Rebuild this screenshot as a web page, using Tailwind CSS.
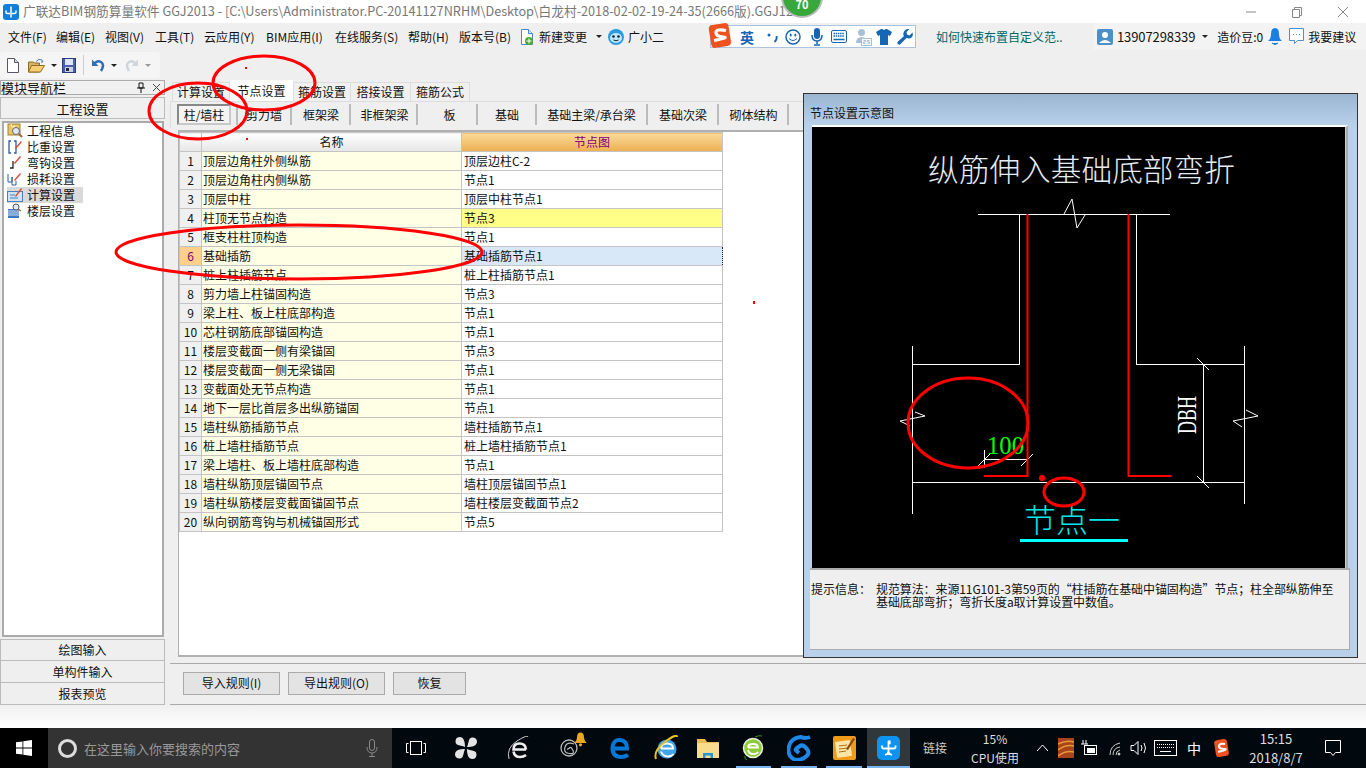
<!doctype html>
<html lang="zh">
<head>
<meta charset="utf-8">
<title>广联达BIM钢筋算量软件</title>
<script src="https://cdn.jsdelivr.net/npm/@tailwindcss/browser@4"></script>
</head>
<body class="m-0">
<div class="relative flex flex-col w-[1366px] h-[768px] overflow-hidden bg-[#efefef] text-[12px] leading-none text-[#111] font-['Noto_Sans_CJK_SC',sans-serif]">

  <!-- title bar -->
  <div class="flex items-center h-[23px] bg-white shrink-0">
    <svg class="ml-[3px] w-[16px] h-[16px]" viewBox="0 0 16 16"><rect width="16" height="16" rx="3" fill="#0f7fd8"/><path d="M8 2.500v11M3 6.500v1.500a1.500 1.500 0 0 0 1.500 1.500H7M13 6.500v1.500a1.500 1.500 0 0 1-1.500 1.500H9" stroke="#fff" stroke-width="1.500" fill="none"/></svg>
    <span class="ml-[4px] w-[780px] text-[12.7px] whitespace-nowrap text-[#777]">广联达BIM钢筋算量软件 GGJ2013 - [C:\Users\Administrator.PC-20141127NRHM\Desktop\白龙村-2018-02-02-19-24-35(2666版).GGJ12</span>
    <div class="ml-auto flex items-center text-[#777]">
      <svg class="w-[46px] h-[16px]" viewBox="0 0 46 16"><path d="M18 8h10" stroke="#888"/></svg>
      <svg class="w-[46px] h-[16px]" viewBox="0 0 46 16"><path d="M18.500 5.500h7v8h-7zM20.500 5.500v-2h7v8h-2" stroke="#888" fill="none"/></svg>
      <svg class="w-[46px] h-[16px]" viewBox="0 0 46 16"><path d="M18 3l10 10M28 3L18 13" stroke="#888"/></svg>
    </div>
  </div>

  <!-- menu bar -->
  <div class="flex items-center h-[27px] shrink-0 relative">
    <span class="ml-[8px] w-[48px]">文件(F)</span>
    <span class="w-[49px]">编辑(E)</span>
    <span class="w-[50px]">视图(V)</span>
    <span class="w-[49px]">工具(T)</span>
    <span class="w-[62px]">云应用(Y)</span>
    <span class="w-[69px]">BIM应用(I)</span>
    <span class="w-[73px]">在线服务(S)</span>
    <span class="w-[51px]">帮助(H)</span>
    <span class="w-[61px]">版本号(B)</span>
    <svg class="w-[14px] h-[18px]" viewBox="0 0 14 18"><path d="M1.500 1.500h7l4 4v11h-11z" fill="#fff" stroke="#4a86c8"/><path d="M8.500 1.500v4h4" fill="#cfe2f5" stroke="#4a86c8"/><circle cx="9" cy="13" r="4" fill="#4ca82e"/><path d="M9 10.500v5M6.500 13h5" stroke="#fff"/></svg>
    <span class="ml-[5px] w-[57px]">新建变更</span>
    <span class="w-0 h-0 border-x-[3px] border-x-transparent border-t-[3px] border-t-[#222]"></span>
    <svg class="ml-[5px] w-[18px] h-[18px]" viewBox="0 0 18 18"><circle cx="9" cy="9" r="8" fill="#2a9be0"/><ellipse cx="9" cy="10" rx="6" ry="5" fill="#bfe6fb"/><circle cx="6.500" cy="8.500" r="1.300" fill="#123"/><circle cx="11.500" cy="8.500" r="1.300" fill="#123"/><path d="M6.500 12q2.500 1.500 5 0" stroke="#123" fill="none"/></svg>
    <span class="ml-[3px]">广小二</span>

    <!-- sogou ime bar -->
    <div class="ml-[46px] relative flex items-center h-[23px] w-[206px] bg-white border border-[#a9c3e2]">
      <svg class="absolute left-[-3px] top-[-5px] w-[24px] h-[30px]" viewBox="0 0 24 30"><rect x="2" y="3" width="20" height="23" rx="4" transform="rotate(-9 12 15)" fill="#f0521f"/><path d="M18 9.500Q8 7.500 8 11.500T15 16t-9 3.500" stroke="#fff" stroke-width="3.200" fill="none"/></svg>
      <span class="ml-[29px] text-[14px] font-bold text-[#1766b4]">英</span>
      <svg class="ml-[13px] w-[12px] h-[14px]" viewBox="0 0 12 14"><circle cx="2" cy="5" r="1.500" fill="#1766b4"/><path d="M9.500 6q1 3-2 6" stroke="#1766b4" stroke-width="1.800" fill="none"/></svg>
      <svg class="ml-[6px] w-[16px] h-[18px]" viewBox="0 0 16 18"><circle cx="8" cy="9" r="7" fill="#fff" stroke="#1766b4" stroke-width="1.500"/><ellipse cx="5.700" cy="7" rx="1" ry="1.600" fill="#1766b4"/><ellipse cx="10.300" cy="7" rx="1" ry="1.600" fill="#1766b4"/><path d="M4 10.500q4 4 8 0" stroke="#1766b4" fill="none"/></svg>
      <svg class="ml-[10px] w-[12px] h-[18px]" viewBox="0 0 12 18"><rect x="3" y="0" width="6" height="11" rx="3" fill="#1766b4"/><path d="M1 7q0 6 5 6t5-6M6 13v3M3 17h6" stroke="#1766b4" stroke-width="1.500" fill="none"/></svg>
      <svg class="ml-[8px] w-[16px] h-[13px]" viewBox="0 0 16 13"><rect x=".5" y=".5" width="15" height="12" rx="1.500" fill="#fff" stroke="#1766b4"/><path d="M2.500 3.500h11M2.500 6h11" stroke="#1766b4" stroke-width="1.500" stroke-dasharray="1.500 .7"/><path d="M2.500 9.500h11" stroke="#1766b4" stroke-width="1.500"/></svg>
      <svg class="ml-[8px] w-[17px] h-[18px]" viewBox="0 0 17 18"><circle cx="6.500" cy="4.500" r="3.500" fill="#a9bfd8"/><path d="M1 15q0-6 5.500-6t5.500 6z" fill="#a9bfd8"/><rect x="6.500" y="10.500" width="10" height="7" fill="#fff" stroke="#a9bfd8"/><path d="M8.500 12.500h2v1.500h-2v1.500h2M14.500 12.500h-2v1.500h2v1.500h-2" stroke="#8aa4c0" stroke-width=".7" fill="none"/></svg>
      <svg class="ml-[4px] w-[16px] h-[16px]" viewBox="0 0 16 16"><path d="M5 0h1.500q1.500 2 3 0H11l5 3-2 4-2-1v10H4V6L2 7 0 3z" fill="#1766b4"/></svg>
      <svg class="ml-[5px] w-[16px] h-[16px]" viewBox="0 0 16 16"><path d="M15.500 3.500l-3 3-2.500-1-.5-2.500 3-3q-4-.5-5.500 2.500T7 7L.5 13q-.5 1 .5 2t2 .5L9.500 9q3 1 5-.5t1-5z" fill="#1766b4"/></svg>
    </div>
    <span class="ml-[20px] w-[132px] text-[#006666] whitespace-nowrap">如何快速布置自定义范..</span>

    <!-- user panel -->
    <div class="absolute right-0 top-0 flex items-center w-[273px] h-full bg-[#f3f3f3]">
      <svg class="ml-[4px] w-[16px] h-[16px]" viewBox="0 0 16 16"><rect width="16" height="16" rx="2" fill="#4d90c8"/><circle cx="8" cy="6" r="3" fill="#fff"/><path d="M2 14q6-6 12 0z" fill="#fff"/></svg>
      <span class="ml-[4px] text-[13px] tracking-[-0.1px]">13907298339</span>
      <span class="ml-[7px] w-0 h-0 border-x-[3px] border-x-transparent border-t-[3px] border-t-[#222]"></span>
      <span class="ml-[9px] w-[47px] whitespace-nowrap">造价豆:0</span>
      <svg class="ml-[4px] w-[14px] h-[20px]" viewBox="0 0 14 20"><path d="M7 1q4 0 4 6 0 5 3 7H0q3-2 3-7 0-6 4-6z" fill="#1a7fe0"/><path d="M4 16q3 3 6 0" fill="#1a7fe0" stroke="#1a7fe0"/></svg>
      <svg class="ml-[6px] w-[17px] h-[19px]" viewBox="0 0 17 19"><path d="M1.500 1.500h14v12h-6l-3 3v-3h-5z" fill="#fff" stroke="#4a8fd6"/><path d="M5 7.500h7" stroke="#4a8fd6" stroke-dasharray="1 2"/></svg>
      <span class="ml-[3px] whitespace-nowrap">我要建议</span>
    </div>
  </div>

  <!-- toolbar -->
  <div class="flex items-center h-[30px] shrink-0">
    <div class="flex items-center h-[26px] w-[160px] rounded-[3px] bg-[#f5f5f5]">
      <svg class="ml-[7px] w-[12px] h-[15px]" viewBox="0 0 12 15"><path d="M.5.5h7l4 4v10H.5z" fill="#fff" stroke="#556"/><path d="M7.500.5v4h4" fill="#dde" stroke="#556"/></svg>
      <svg class="ml-[9px] w-[17px] h-[15px]" viewBox="0 0 17 15"><path d="M.5 14V4h5l1 1h5v9z" fill="#d8b368" stroke="#8d6a2a"/><path d="M.5 14l3-6.500h13L12.500 14z" fill="#f5cf72" stroke="#8d6a2a"/><path d="M8 3.500q3-3.500 6-1.500l1 2-2 0" stroke="#4a7fb8" fill="none"/></svg>
      <span class="ml-[6px] w-0 h-0 border-x-[3px] border-x-transparent border-t-[3px] border-t-[#222]"></span>
      <svg class="ml-[5px] w-[14px] h-[15px]" viewBox="0 0 14 15"><rect x=".5" y=".5" width="13" height="14" fill="#4a5fb0" stroke="#2c3a80"/><rect x="3" y="1" width="8" height="6" fill="#dfe4f5"/><rect x="3" y="9" width="8" height="5" fill="#c8cfe8"/><rect x="4" y="10" width="3" height="3" fill="#223"/></svg>
      <span class="ml-[7px] w-px h-[20px] bg-[#ccc]"></span>
      <svg class="ml-[7px] w-[14px] h-[15px]" viewBox="0 0 14 15"><path d="M1 1.500v6.500h6.500" fill="#2f6fb8"/><path d="M2.500 7Q6 1.500 10 4t0 9" stroke="#2f6fb8" stroke-width="2.500" fill="none"/></svg>
      <span class="ml-[6px] w-0 h-0 border-x-[3px] border-x-transparent border-t-[3px] border-t-[#222]"></span>
      <svg class="ml-[8px] w-[14px] h-[15px]" viewBox="0 0 14 15"><path d="M13 1.500v6.500H6.500" fill="#cfd5da"/><path d="M11.500 7Q8 1.500 4 4t0 9" stroke="#cfd5da" stroke-width="2.500" fill="none"/></svg>
      <span class="ml-[6px] w-0 h-0 border-x-[3px] border-x-transparent border-t-[3px] border-t-[#999]"></span>
    </div>
  </div>

  <!-- main -->
  <div class="flex h-[625px] shrink-0">
    <!-- navigator -->
    <aside class="flex flex-col w-[165px] shrink-0">
      <div class="flex items-center h-[15px] border border-[#aaa] bg-[#f0f0f0]">
        <span class="text-[13px]">模块导航栏</span>
        <svg class="ml-auto w-[10px] h-[11px]" viewBox="0 0 10 11"><path d="M3 1h4v5H3zM1 6h8M5 6v5" stroke="#111" fill="none"/></svg>
        <svg class="ml-[6px] mr-[3px] w-[9px] h-[9px]" viewBox="0 0 9 9"><path d="M1 1l7 7M8 1L1 8" stroke="#444"/></svg>
      </div>
      <div class="flex items-center justify-center h-[22px] mt-[2px] border border-[#bbb] bg-[#f0f0f0] text-[13px]">工程设置</div>
      <div class="flex-1 mt-[2px] ml-[2px] mr-px border-2 border-[#aaa] bg-white pl-[3px]">
        <div class="flex items-center h-[16px] gap-[4px]">
          <svg class="w-[16px] h-[16px]" viewBox="0 0 16 16"><rect x="1" y="1" width="12" height="11" fill="#e9c766" stroke="#a08030"/><path d="M4 1l1 3 3-1-2 3 2 2" stroke="#fff6c8" fill="none"/><circle cx="9" cy="8" r="3.500" fill="#dfeaf5" stroke="#667"/><path d="M12 11l3 3" stroke="#a06a30" stroke-width="2"/></svg>
          <span>工程信息</span>
        </div>
        <div class="flex items-center h-[16px] gap-[4px]">
          <svg class="w-[16px] h-[16px]" viewBox="0 0 16 16"><path d="M4 2H2v12h2M7 2h2v12H7" stroke="#2f5f9e" stroke-width="1.300" fill="none"/><path d="M8 9l6-7 1 1-6 7z" fill="#e0463a"/></svg>
          <span>比重设置</span>
        </div>
        <div class="flex items-center h-[16px] gap-[4px]">
          <svg class="w-[16px] h-[16px]" viewBox="0 0 16 16"><path d="M6 6v7H3" stroke="#222" stroke-width="1.300" fill="none"/><path d="M7 8l6-7 1 1-6 7z" fill="#e0463a"/></svg>
          <span>弯钩设置</span>
        </div>
        <div class="flex items-center h-[16px] gap-[4px]">
          <svg class="w-[16px] h-[16px]" viewBox="0 0 16 16"><path d="M1 3v8h4V6v8h4v-4" stroke="#2f5f9e" fill="none"/><path d="M7 9l6-7 1 1-6 7z" fill="#e0463a"/></svg>
          <span>损耗设置</span>
        </div>
        <div class="flex items-center h-[16px] gap-[4px] w-[76px] bg-[#d9d9d9]">
          <svg class="w-[16px] h-[16px]" viewBox="0 0 16 16"><rect x=".5" y="4.500" width="15" height="10" fill="#cfe3f6" stroke="#4a80b8"/><path d="M3 8h5M3 11h8" stroke="#4a80b8"/><path d="M8 9l6-8 1 1-6 8z" fill="#e0463a"/></svg>
          <span>计算设置</span>
        </div>
        <div class="flex items-center h-[16px] gap-[4px]">
          <svg class="w-[16px] h-[16px]" viewBox="0 0 16 16"><path d="M1 6h11v9H1z" fill="#3f78c0"/><path d="M1 8h11M1 10h11M1 12h11" stroke="#cfe3f6"/><circle cx="9" cy="4" r="3" fill="#dfeaf5" stroke="#556"/><path d="M11 6l3 2" stroke="#a06a30" stroke-width="1.500"/></svg>
          <span>楼层设置</span>
        </div>
      </div>
      <div class="flex items-center justify-center h-[22px] mt-[2px] border border-[#bbb]">绘图输入</div>
      <div class="flex items-center justify-center h-[22px] border border-t-0 border-[#bbb]">单构件输入</div>
      <div class="flex items-center justify-center h-[22px] border border-t-0 border-[#bbb]">报表预览</div>
    </aside>

    <!-- settings area -->
    <div class="flex flex-col ml-[5px] w-[1196px]">
      <div class="flex h-[580px] shrink-0">
        <div class="flex flex-col w-[633px] shrink-0">
          <!-- tabs -->
          <div class="flex items-end h-[21px] pl-[2px]">
            <span class="flex items-center justify-center w-[58px] h-[19px] border border-b-0 border-[#ddd] bg-[#f0f0f0]">计算设置</span>
            <span class="flex items-center justify-center w-[63px] h-[21px] bg-white">节点设置</span>
            <span class="flex items-center justify-center w-[58px] h-[19px] border border-b-0 border-[#ddd] bg-[#f0f0f0]">箍筋设置</span>
            <span class="flex items-center justify-center w-[60px] h-[19px] border border-b-0 border-l-0 border-[#ddd] bg-[#f0f0f0]">搭接设置</span>
            <span class="flex items-center justify-center w-[59px] h-[19px] border border-b-0 border-l-0 border-[#ddd] bg-[#f0f0f0]">箍筋公式</span>
          </div>
          <!-- sub tabs -->
          <div class="flex items-start h-[27px] pt-[2px] pl-[6px] border-t border-l border-[#ddd]">
            <span class="flex items-center justify-center w-[54px] h-[21px] border-2 border-[#c8c8c8] border-t-[#888] border-l-[#888] bg-[#f4f4f4]">柱/墙柱</span>
            <span class="flex items-center justify-center w-[56px] h-[21px] ml-[5px] border-x-2 border-[#bbb]">剪力墙</span>
            <span class="flex items-center justify-center w-[59px] h-[21px] pl-px border-r-2 border-[#bbb]">框架梁</span>
            <span class="flex items-center justify-center w-[67px] h-[21px] pl-[2px] border-r-2 border-[#bbb]">非框架梁</span>
            <span class="flex items-center justify-center w-[60px] h-[21px] pl-[5px] border-r-2 border-[#bbb]">板</span>
            <span class="flex items-center justify-center w-[59px] h-[21px] pl-px border-r-2 border-[#bbb]">基础</span>
            <span class="flex items-center justify-center w-[111px] h-[21px] border-r-2 border-[#bbb]">基础主梁/承台梁</span>
            <span class="flex items-center justify-center w-[71px] h-[21px] pl-px border-r-2 border-[#bbb]">基础次梁</span>
            <span class="flex items-center justify-center w-[70px] h-[21px] pl-px border-r-2 border-[#bbb]">砌体结构</span>
          </div>
          <!-- grid -->
          <div class="flex-1 ml-[8px] mb-[3px] mt-[2px] bg-white border-t-2 border-l border-b-2 border-[#b0b0b0]">
            <table class="w-[543px] table-fixed border-collapse">
              <colgroup><col class="w-[22px]"><col class="w-[260px]"><col class="w-[261px]"></colgroup>
              <thead>
                <tr class="h-[19px]">
                  <th class="p-0 border border-[#c4c4c4] bg-gradient-to-b from-white to-[#e6e6e6]"></th>
                  <th class="p-0 font-normal border border-[#c4c4c4] bg-gradient-to-b from-white to-[#e6e6e6]">名称</th>
                  <th class="p-0 font-normal text-[#800080] border border-[#c4c4c4] bg-gradient-to-b from-[#f9d999] to-[#edb04f]">节点图</th>
                </tr>
              </thead>
              <tbody>
                <tr class="h-[19px]"><td class="p-0 text-center border border-[#c4c4c4] bg-[#f0f0f0]">1</td><td class="pl-px border border-[#c4c4c4] bg-[#ffffe6]">顶层边角柱外侧纵筋</td><td class="pl-[2px] border border-[#c4c4c4]">顶层边柱C-2</td></tr>
                <tr class="h-[19px]"><td class="p-0 text-center border border-[#c4c4c4] bg-[#f0f0f0]">2</td><td class="pl-px border border-[#c4c4c4] bg-[#ffffe6]">顶层边角柱内侧纵筋</td><td class="pl-[2px] border border-[#c4c4c4]">节点1</td></tr>
                <tr class="h-[19px]"><td class="p-0 text-center border border-[#c4c4c4] bg-[#f0f0f0]">3</td><td class="pl-px border border-[#c4c4c4] bg-[#ffffe6]">顶层中柱</td><td class="pl-[2px] border border-[#c4c4c4]">顶层中柱节点1</td></tr>
                <tr class="h-[19px]"><td class="p-0 text-center border border-[#c4c4c4] bg-[#f0f0f0]">4</td><td class="pl-px border border-[#c4c4c4] bg-[#ffffe6]">柱顶无节点构造</td><td class="pl-[2px] border border-[#c4c4c4] bg-[#ffff88]">节点3</td></tr>
                <tr class="h-[19px]"><td class="p-0 text-center border border-[#c4c4c4] bg-[#f0f0f0]">5</td><td class="pl-px border border-[#c4c4c4] bg-[#ffffe6]">框支柱柱顶构造</td><td class="pl-[2px] border border-[#c4c4c4]">节点1</td></tr>
                <tr class="h-[19px]"><td class="p-0 text-center text-[#800080] border border-[#c4c4c4] bg-[#ffcf8c]">6</td><td class="pl-px border border-[#c4c4c4] bg-[#ffffe6]">基础插筋</td><td class="pl-[2px] border border-dotted border-[#222] bg-[#d9e8f8]">基础插筋节点1</td></tr>
                <tr class="h-[19px]"><td class="p-0 text-center border border-[#c4c4c4] bg-[#f0f0f0]">7</td><td class="pl-px border border-[#c4c4c4] bg-[#ffffe6]">桩上柱插筋节点</td><td class="pl-[2px] border border-[#c4c4c4]">桩上柱插筋节点1</td></tr>
                <tr class="h-[19px]"><td class="p-0 text-center border border-[#c4c4c4] bg-[#f0f0f0]">8</td><td class="pl-px border border-[#c4c4c4] bg-[#ffffe6]">剪力墙上柱锚固构造</td><td class="pl-[2px] border border-[#c4c4c4]">节点3</td></tr>
                <tr class="h-[19px]"><td class="p-0 text-center border border-[#c4c4c4] bg-[#f0f0f0]">9</td><td class="pl-px border border-[#c4c4c4] bg-[#ffffe6]">梁上柱、板上柱底部构造</td><td class="pl-[2px] border border-[#c4c4c4]">节点1</td></tr>
                <tr class="h-[19px]"><td class="p-0 text-center border border-[#c4c4c4] bg-[#f0f0f0]">10</td><td class="pl-px border border-[#c4c4c4] bg-[#ffffe6]">芯柱钢筋底部锚固构造</td><td class="pl-[2px] border border-[#c4c4c4]">节点1</td></tr>
                <tr class="h-[19px]"><td class="p-0 text-center border border-[#c4c4c4] bg-[#f0f0f0]">11</td><td class="pl-px border border-[#c4c4c4] bg-[#ffffe6]">楼层变截面一侧有梁锚固</td><td class="pl-[2px] border border-[#c4c4c4]">节点3</td></tr>
                <tr class="h-[19px]"><td class="p-0 text-center border border-[#c4c4c4] bg-[#f0f0f0]">12</td><td class="pl-px border border-[#c4c4c4] bg-[#ffffe6]">楼层变截面一侧无梁锚固</td><td class="pl-[2px] border border-[#c4c4c4]">节点1</td></tr>
                <tr class="h-[19px]"><td class="p-0 text-center border border-[#c4c4c4] bg-[#f0f0f0]">13</td><td class="pl-px border border-[#c4c4c4] bg-[#ffffe6]">变截面处无节点构造</td><td class="pl-[2px] border border-[#c4c4c4]">节点1</td></tr>
                <tr class="h-[19px]"><td class="p-0 text-center border border-[#c4c4c4] bg-[#f0f0f0]">14</td><td class="pl-px border border-[#c4c4c4] bg-[#ffffe6]">地下一层比首层多出纵筋锚固</td><td class="pl-[2px] border border-[#c4c4c4]">节点1</td></tr>
                <tr class="h-[19px]"><td class="p-0 text-center border border-[#c4c4c4] bg-[#f0f0f0]">15</td><td class="pl-px border border-[#c4c4c4] bg-[#ffffe6]">墙柱纵筋插筋节点</td><td class="pl-[2px] border border-[#c4c4c4]">墙柱插筋节点1</td></tr>
                <tr class="h-[19px]"><td class="p-0 text-center border border-[#c4c4c4] bg-[#f0f0f0]">16</td><td class="pl-px border border-[#c4c4c4] bg-[#ffffe6]">桩上墙柱插筋节点</td><td class="pl-[2px] border border-[#c4c4c4]">桩上墙柱插筋节点1</td></tr>
                <tr class="h-[19px]"><td class="p-0 text-center border border-[#c4c4c4] bg-[#f0f0f0]">17</td><td class="pl-px border border-[#c4c4c4] bg-[#ffffe6]">梁上墙柱、板上墙柱底部构造</td><td class="pl-[2px] border border-[#c4c4c4]">节点1</td></tr>
                <tr class="h-[19px]"><td class="p-0 text-center border border-[#c4c4c4] bg-[#f0f0f0]">18</td><td class="pl-px border border-[#c4c4c4] bg-[#ffffe6]">墙柱纵筋顶层锚固节点</td><td class="pl-[2px] border border-[#c4c4c4]">墙柱顶层锚固节点1</td></tr>
                <tr class="h-[19px]"><td class="p-0 text-center border border-[#c4c4c4] bg-[#f0f0f0]">19</td><td class="pl-px border border-[#c4c4c4] bg-[#ffffe6]">墙柱纵筋楼层变截面锚固节点</td><td class="pl-[2px] border border-[#c4c4c4]">墙柱楼层变截面节点2</td></tr>
                <tr class="h-[19px]"><td class="p-0 text-center border border-[#c4c4c4] bg-[#f0f0f0]">20</td><td class="pl-px border border-[#c4c4c4] bg-[#ffffe6]">纵向钢筋弯钩与机械锚固形式</td><td class="pl-[2px] border border-[#c4c4c4]">节点5</td></tr>
              </tbody>
            </table>
          </div>
        </div>

        <!-- diagram panel -->
        <div class="flex flex-col w-[555px] h-[565px] mt-[13px] border border-[#333] bg-[#b8d0ea] shrink-0">
          <div class="flex items-center h-[31px] pl-[6px] pt-[6px] bg-gradient-to-b from-[#9bb5d1] to-[#b8d0ea]">节点设置示意图</div>
          <div class="ml-[8px] mr-[9px] border-t-2 border-white border-r-2 border-r-[#aaa]">
            <svg class="block w-[533px] h-[441px] bg-black" viewBox="812 126 533 441">
              <text x="928" y="180" font-size="30.700" font-weight="300" fill="#e4ecf4" font-family="Noto Sans CJK SC">纵筋伸入基础底部弯折</text>
              <g stroke="#fff" fill="none" shape-rendering="crispEdges">
                <path d="M978 213.500H1170M1019.500 213v150.500H912M912.500 345v168M1136.500 213v150.500H1244M1244.500 345v158M912 481.500h332M1203.500 363v118"/>
                <path d="M1197 357l12 12M1197 475l12 12M978 465l12-12M1021 465l12-12M984 458.500h43M984.500 449v18"/>
              </g>
              <g stroke="#fff" fill="none">
                <path d="M1064 213l8-15 5 29 8-13"/>
                <path d="M915 411l10 4-25 5 10 5"/>
                <path d="M1246 409l12 6-25 5 9 6"/>
              </g>
              <path d="M1027.500 213v262H984M1128.500 213v262h43" stroke="#f00" stroke-width="2" fill="none"/>
              <circle cx="1042" cy="477" r="3" fill="#f00"/>
              <text x="987" y="453" font-size="26" fill="#0f0" font-family="Liberation Serif" textLength="37" lengthAdjust="spacingAndGlyphs">100</text>
              <text transform="translate(1196 433) rotate(-90)" font-size="28" fill="#fff" font-family="Liberation Serif" textLength="38" lengthAdjust="spacingAndGlyphs">DBH</text>
              <text x="1024" y="531" font-size="32" font-weight="300" fill="#00e8e8" font-family="Noto Sans CJK SC">节点一</text>
              <rect x="1020" y="538" width="108" height="3" fill="#00ffff"/>
            </svg>
          </div>
          <div class="flex flex-1 ml-[6px] mr-[7px] mb-[7px] pt-[12px] pl-px border-t-2 border-[#aaa] border-r border-b bg-[#efefef] leading-[13px]">
            <span class="w-[65px] shrink-0">提示信息：</span>
            <p class="whitespace-nowrap tracking-[-0.1px]">规范算法：来源11G101-3第59页的“柱插筋在基础中锚固构造”节点；柱全部纵筋伸至<br>基础底部弯折；弯折长度a取计算设置中数值。</p>
          </div>
        </div>
      </div>

      <!-- rule buttons -->
      <div class="flex items-center gap-[8px] h-[43px] mt-[3px] pl-[13px] pb-[2px] border-t border-b border-[#aaa] bg-[#efefef]">
        <span class="flex items-center justify-center w-[97px] h-[23px] border border-[#aaa] bg-[#e3e3e3]">导入规则(I)</span>
        <span class="flex items-center justify-center w-[97px] h-[23px] border border-[#aaa] bg-[#e3e3e3]">导出规则(O)</span>
        <span class="flex items-center justify-center w-[73px] h-[23px] border border-[#aaa] bg-[#e3e3e3]">恢复</span>
      </div>
    </div>
  </div>

  <div class="h-[23px] shrink-0 bg-gradient-to-b from-[#f0f0f0] to-white"></div>

  <!-- taskbar -->
  <div class="flex items-center h-[40px] shrink-0 bg-[#01090e] text-white">
    <div class="flex items-center justify-center w-[48px] h-full bg-black">
      <svg class="w-[16px] h-[16px]" viewBox="0 0 16 16" fill="#fff"><path d="M0 2.300l6.500-.9v6.200H0zM7.300 1.300L16 0v7.600H7.300zM0 8.400h6.500v6.200L0 13.700zM7.300 8.400H16V16l-8.700-1.300z"/></svg>
    </div>
    <div class="flex items-center w-[344px] h-full bg-[#333] text-[#999] text-[13px]">
      <span class="ml-[10px] w-[19px] h-[19px] rounded-full border-[3px] border-[#ddd]"></span>
      <span class="ml-[7px]">在这里输入你要搜索的内容</span>
      <svg class="ml-auto mr-[14px] w-[12px] h-[18px]" viewBox="0 0 12 18"><rect x="3.500" y=".5" width="5" height="11" rx="2.500" fill="none" stroke="#888"/><path d="M1 8q0 6 5 6t5-6M6 14v3M3 17.500h6" stroke="#888" fill="none"/></svg>
    </div>
    <div class="flex items-center justify-center w-[48px] h-full">
      <svg class="w-[20px] h-[14px]" viewBox="0 0 20 14"><rect x="4.500" y=".5" width="11" height="13" fill="none" stroke="#fff"/><path d="M2.500 2.500h-2v9h2M17.500 2.500h2v9h-2" stroke="#fff" fill="none"/></svg>
    </div>
    <!-- pinwheel -->
    <div class="flex items-center justify-center w-[52px] h-full">
      <svg class="w-[22px] h-[22px]" viewBox="-11 -11 22 22" fill="#e4e4e4">
        <path d="M-1-1C-1-6-2-11-6.500-11S-11.500-5-9-3.500C-7-2.500-3-2-1-1z"/>
        <path transform="rotate(90)" d="M-1-1C-1-6-2-11-6.500-11S-11.500-5-9-3.500C-7-2.500-3-2-1-1z"/>
        <path transform="rotate(180)" d="M-1-1C-1-6-2-11-6.500-11S-11.500-5-9-3.500C-7-2.500-3-2-1-1z"/>
        <path transform="rotate(270)" d="M-1-1C-1-6-2-11-6.500-11S-11.500-5-9-3.500C-7-2.500-3-2-1-1z"/>
      </svg>
    </div>
    <!-- grey e -->
    <div class="flex items-center justify-center w-[52px] h-full">
      <svg class="w-[22px] h-[24px]" viewBox="0 0 22 24"><path d="M19 13.500H6.500q0-6 6-6t6.500 6M6.500 15.500q1 5.500 6.500 5.500 3.500 0 6-2" stroke="#eee" stroke-width="2.600" fill="none"/><path d="M2 23Q-1 12 10 5t11-4" stroke="#ccc" fill="none"/></svg>
    </div>
    <!-- spiral with bell -->
    <div class="relative flex items-center justify-center w-[50px] h-full">
      <svg class="w-[18px] h-[18px]" viewBox="0 0 18 18"><circle cx="9" cy="9" r="8" fill="none" stroke="#bbb" stroke-width="1.300"/><path d="M14 5Q7 2.500 5 8t4 6.500 4-3-3-3-3 2" stroke="#bbb" stroke-width="1.200" fill="none"/></svg>
      <svg class="absolute right-[7px] top-[4px] w-[13px] h-[15px]" viewBox="0 0 13 15"><path d="M6.500 .5q3.500 0 3.500 5 0 3 2.500 5.500H.5Q3 8.500 3 5.500q0-5 3.500-5z" fill="#e9a820"/><circle cx="6.500" cy="12.800" r="1.600" fill="#e9a820"/></svg>
    </div>
    <!-- edge -->
    <div class="flex items-center justify-center w-[52px] h-full">
      <svg class="w-[20px] h-[22px]" viewBox="0 0 20 22"><path d="M4 11.500h13q0-8-7-8.500T2.500 11q0 9 8.500 9 3.500 0 7-2" stroke="#0078d7" stroke-width="4" fill="none"/></svg>
    </div>
    <!-- ie -->
    <div class="flex items-center justify-center w-[40px] h-full">
      <svg class="w-[24px] h-[26px]" viewBox="0 0 24 26"><circle cx="13" cy="14" r="9.500" fill="#3fa4e8"/><path d="M7 13.500h12q0-5-6-5t-6 5M7 16.500q2 5 7 5 3.500 0 5.500-2.500" stroke="#fff" stroke-width="2" fill="none"/><path d="M2 24Q-1 16 11 7T23 2" stroke="#f1c21b" stroke-width="2" fill="none"/></svg>
    </div>
    <!-- explorer -->
    <div class="flex items-center justify-center w-[44px] h-full">
      <svg class="w-[22px] h-[20px]" viewBox="0 0 22 20"><path d="M0 1h8l2 3h12v15H0z" fill="#e8bc54"/><path d="M0 5h22v15H0z" fill="#f8dc8c"/><path d="M6 20v-5h10v5h-2.500v-2.500h-5V20z" fill="#2a94d6"/></svg>
    </div>
    <div class="relative flex items-center justify-center w-[46px] h-full">
      <svg class="w-[22px] h-[26px]" viewBox="0 0 22 26"><circle cx="11" cy="13" r="9.500" fill="#8ccb3a" stroke="#e8f0e0" stroke-width="1.500"/><path d="M6 12.500h10q0-3.500-5-3.500t-5 3.500M6 15q1 4 5 4t5-2" stroke="#fff" stroke-width="1.800" fill="none"/><path d="M13 2q4-2 7-1M3 21q-1 3 2 4" stroke="#4a8a20" fill="none"/></svg>
      <span class="absolute bottom-0 left-[6px] w-[35px] h-[2px] bg-[#78b4ee]"></span>
    </div>
    <div class="relative flex items-center justify-center w-[45px] h-full">
      <svg class="w-[24px] h-[26px]" viewBox="0 0 24 26"><path d="M23 2q-5 2-9 0Q4 3 2 11t3 12 12 0 3-9-7-3-4 3 3 4" fill="none" stroke="#1e88e8" stroke-width="4"/></svg>
      <span class="absolute bottom-0 left-[5px] w-[36px] h-[2px] bg-[#78b4ee]"></span>
    </div>
    <div class="relative flex items-center justify-center w-[46px] h-full">
      <svg class="w-[23px] h-[24px]" viewBox="0 0 23 24"><rect width="23" height="24" rx="2" fill="#f09a1a"/><rect x="3" y="5" width="15" height="16" fill="#fbe6a8" transform="rotate(-8 10 13)"/><path d="M6 10l8-1M6 13l9-1M6 16l7-1" stroke="#b06c10"/><path d="M13 13l7-11 2 1-7 11z" fill="#8c4a10"/></svg>
      <span class="absolute bottom-0 left-[5px] w-[36px] h-[2px] bg-[#78b4ee]"></span>
    </div>
    <div class="relative flex items-center justify-center w-[43px] h-full bg-[#30383c]">
      <svg class="w-[23px] h-[24px]" viewBox="0 0 23 24"><rect width="23" height="24" rx="5" fill="#0d93f2"/><path d="M11.500 5v14M11.500 5a1.500 1.500 0 0 1 0 3M5 9.500v1.500a1.500 1.500 0 0 0 1.500 1.500H17a1.500 1.500 0 0 0 1.500-1.500V9.500M8 19q3.500-1 3.500-4 0 3 3.500 4" stroke="#fff" stroke-width="1.800" fill="none"/></svg>
      <span class="absolute bottom-0 left-0 w-full h-[2px] bg-[#78b4ee]"></span>
    </div>
    <span class="ml-[13px] w-[47px] text-[#ccc]">链接</span>
    <div class="flex flex-col items-center gap-[7px] w-[50px] text-[#ddd] whitespace-nowrap">
      <span>15%</span><span>CPU使用</span>
    </div>
    <svg class="ml-[16px] w-[13px] h-[8px]" viewBox="0 0 13 8"><path d="M1 7l5.500-6L12 7" stroke="#fff" fill="none"/></svg>
    <svg class="ml-[9px] w-[16px] h-[20px]" viewBox="0 0 16 20"><rect width="16" height="20" fill="#a8431a"/><path d="M0 6q8-4 16-2M0 12q8-6 16-4M0 18q8-6 16-4" stroke="#e89a3a" stroke-width="1.500" fill="none"/></svg>
    <svg class="ml-[7px] w-[16px] h-[16px]" viewBox="0 0 16 16" fill="#fff"><rect x="3.500" y="5.500" width="12" height="9" fill="none" stroke="#fff"/><rect x="6" y="8" width="8" height="5"/><path d="M2 0v4M5 0v4M0 4h7" stroke="#fff"/></svg>
    <svg class="ml-[12px] w-[15px] h-[16px]" viewBox="0 0 15 16" fill="none" stroke="#ccc"><path d="M1 15Q1 5 11 3M4 15q0-7 7-8M7 15q0-4 4-5"/><circle cx="10" cy="14" r="1" fill="#fff"/></svg>
    <svg class="ml-[6px] w-[17px] h-[16px]" viewBox="0 0 17 16" fill="none" stroke="#fff"><path d="M1 5.500h3l4-4v13l-4-4H1zM11 5q2 3 0 6M14 3q3 5 0 10"/></svg>
    <svg class="ml-[7px] w-[23px] h-[16px]" viewBox="0 0 23 16" fill="none" stroke="#fff"><rect x=".5" y=".5" width="22" height="15"/><path d="M3 4.500h17M3 7.500h17" stroke-dasharray="1 1"/><path d="M6 11.500h11"/></svg>
    <span class="ml-[10px] text-[14px] w-[14px]">中</span>
    <svg class="ml-[12px] w-[17px] h-[20px]" viewBox="0 0 17 20"><rect x="2" y="1.500" width="13" height="17" rx="3" transform="rotate(-9 8.500 10)" fill="#f0521f"/><path d="M12 6q-6-1-6 2t5 3-6 3" stroke="#fff" stroke-width="2.200" fill="none"/></svg>
    <div class="flex flex-col items-center gap-[6px] ml-[16px] w-[60px] text-[#ddd] text-[13px] whitespace-nowrap">
      <span>15:15</span><span>2018/8/7</span>
    </div>
    <div class="flex items-center justify-center flex-1 h-full pr-[6px]">
      <svg class="w-[16px] h-[17px]" viewBox="0 0 16 17"><path d="M.5.5h15v12h-5l-2.500 3-2.500-3h-5z" fill="none" stroke="#fff"/></svg>
    </div>
  </div>

  <!-- green badge over the title bar -->
  <div class="absolute left-[781px] top-[-24px] flex items-end justify-center w-[42px] h-[42px] pb-[6px] rounded-full bg-[#38a83d] border-2 border-[#bbb] text-white font-bold text-[11px]">70</div>

  <!-- hand-drawn red annotations -->
  <svg class="absolute inset-0 w-[1366px] h-[768px] pointer-events-none" viewBox="0 0 1366 768" fill="none" stroke="#f00" stroke-width="3">
    <ellipse cx="264" cy="83" rx="51" ry="27"/>
    <ellipse cx="198" cy="111" rx="49" ry="28"/>
    <ellipse cx="299" cy="252" rx="183" ry="27"/>
    <ellipse cx="968" cy="423" rx="60" ry="45"/>
    <ellipse cx="1064" cy="492" rx="20" ry="14"/>
    <path d="M246 67v2M247 138v2M754 301v3" stroke-width="2"/>
  </svg>
</div>
</body>
</html>
